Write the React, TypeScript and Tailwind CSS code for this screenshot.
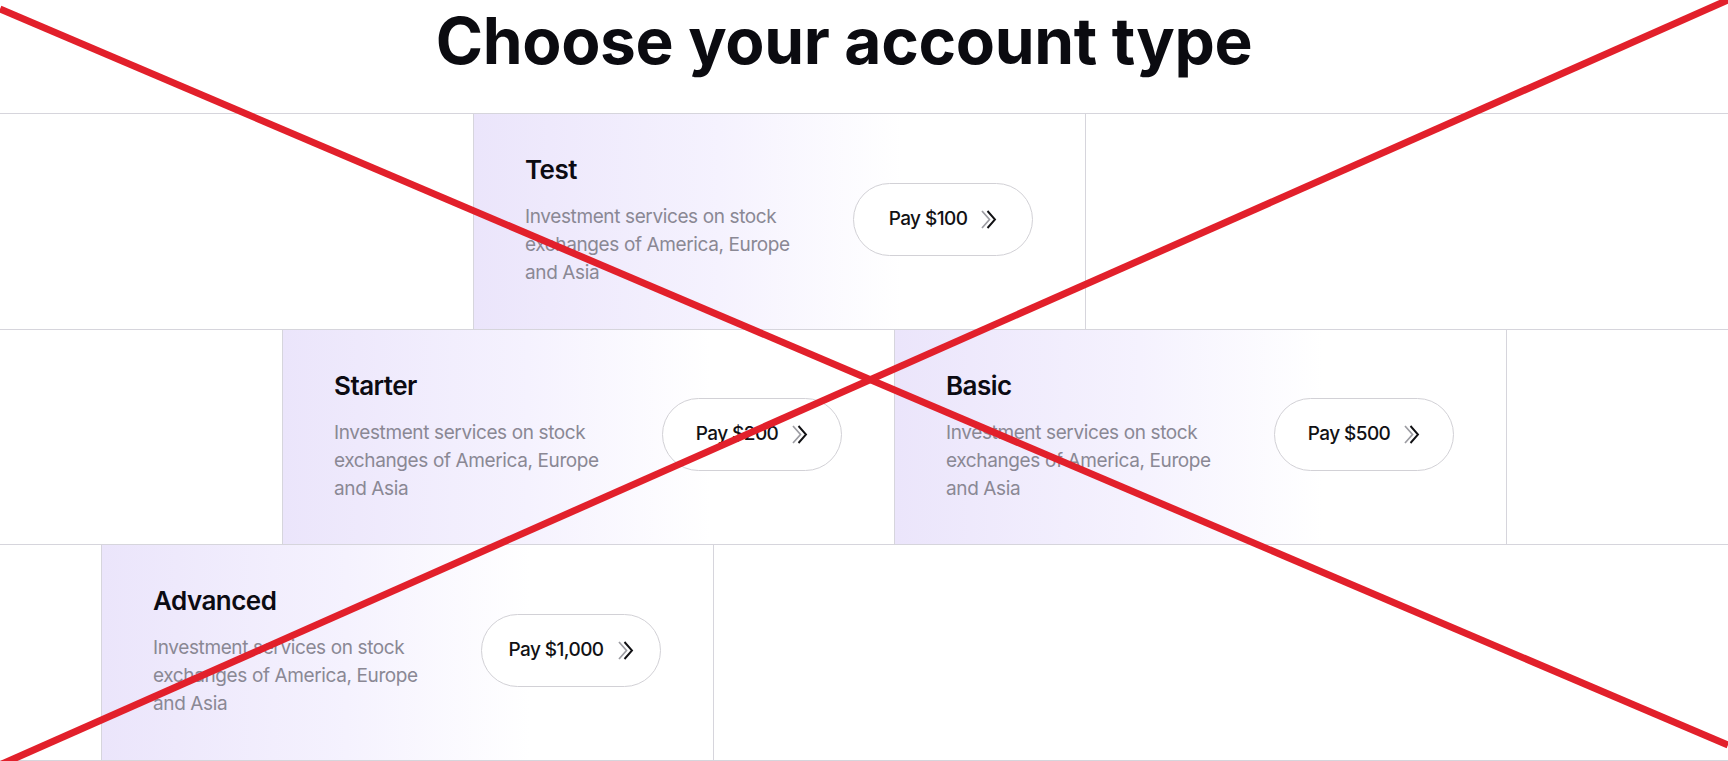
const plans = [
  { name: "Test", price: "$100" },
  { name: "Starter", price: "$200" },
  { name: "Basic", price: "$500" },
  { name: "Advanced", price: "$1,000" },
];

function Chevrons() {
  return (
    <svg width="17" height="21" viewBox="0 0 17 21" fill="none">
      <polyline points="2,2 9.5,10.5 2,19" stroke="#9c9ca2" strokeWidth="1.7" />
      <polyline points="7.5,2 15,10.5 7.5,19" stroke="#111114" strokeWidth="1.9" />
    </svg>
  );
}

function PlanCard({ name, price, className = "" }: { name: string; price: string; className?: string }) {
  return (
    <div
      className={`flex h-full w-[613px] shrink-0 items-center justify-between border-x border-[#d6d5dc] bg-linear-to-r from-[#ebe5fb] via-[#f5f2fe] via-40% to-white to-70% pb-[5px] pl-[51px] pr-[52px] ${className}`}
    >
      <div className="mt-[3px]">
        <h3 className="text-[26px] leading-[32px] font-semibold tracking-[-0.02em] text-[#0c0b12]">{name}</h3>
        <p className="mt-[17px] w-[285px] text-[19px] leading-[28px] tracking-[-0.02em] text-[#8a8894]">
          Investment services on stock exchanges of America, Europe and Asia
        </p>
      </div>
      <button className="flex h-[73px] w-[180px] items-center justify-center gap-[13px] rounded-full border border-[#d2d1d6] bg-white text-[19px] font-medium tracking-[-0.03em] text-[#111114]">
        <span>Pay {price}</span>
        <Chevrons />
      </button>
    </div>
  );
}

export default function App() {
  return (
    <div className="relative h-[761px] w-full overflow-hidden bg-white" style={{ fontFamily: "Inter, 'Noto Sans', sans-serif" }}>
      <header className="flex h-[114px] justify-center border-b border-[#d6d5dc] pr-[40px] pt-[9px]">
        <h1 className="text-[64px] leading-none font-bold tracking-[-0.005em] text-[#0b0b10]">Choose your account type</h1>
      </header>

      <div className="flex h-[216px] border-b border-[#d6d5dc]">
        <div className="w-[473px] shrink-0" />
        <PlanCard {...plans[0]} />
      </div>

      <div className="flex h-[215px] border-b border-[#d6d5dc]">
        <div className="w-[282px] shrink-0" />
        <PlanCard {...plans[1]} />
        <PlanCard {...plans[2]} className="-ml-px" />
      </div>

      <div className="flex h-[216px] border-b border-[#d6d5dc]">
        <div className="w-[101px] shrink-0" />
        <PlanCard {...plans[3]} />
      </div>

      <svg
        className="pointer-events-none absolute inset-0"
        width="1728"
        height="761"
        viewBox="0 0 1728 761"
      >
        <line x1="0" y1="9" x2="1728" y2="745" stroke="#e2202b" strokeWidth="7" />
        <line x1="1728" y1="0" x2="2" y2="764" stroke="#e2202b" strokeWidth="7" />
      </svg>
    </div>
  );
}
